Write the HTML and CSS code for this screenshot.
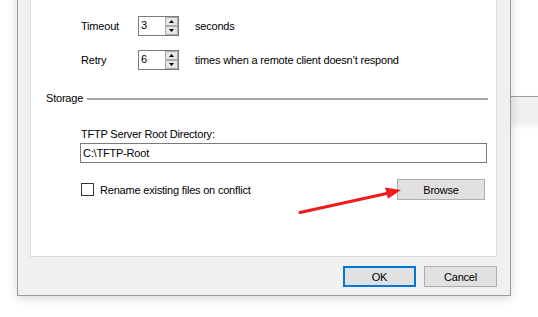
FILE: index.html
```html
<!DOCTYPE html>
<html>
<head>
<meta charset="utf-8">
<link rel="stylesheet" href="styles.css">
</head>
<body>
<div class="desktop">
  <div class="bg-window"></div>
  <div class="dialog">
    <div class="panel">
      <div class="row first">
        <span class="lbl">Timeout</span>
        <div class="spin">
          <span class="val">3</span>
          <svg class="spin-btns" width="13" height="18" viewBox="0 0 13 18">
            <rect x="0.5" y="0.5" width="12" height="8" fill="#e6e6e6" stroke="#acacac"/>
            <rect x="0.5" y="9.5" width="12" height="8" fill="#e6e6e6" stroke="#acacac"/>
            <polygon points="4,6 9,6 6.5,3" fill="#000"/>
            <polygon points="4,12 9,12 6.5,15" fill="#000"/>
          </svg>
        </div>
        <span class="unit">seconds</span>
      </div>
      <div class="row">
        <span class="lbl">Retry</span>
        <div class="spin">
          <span class="val">6</span>
          <svg class="spin-btns" width="13" height="18" viewBox="0 0 13 18">
            <rect x="0.5" y="0.5" width="12" height="8" fill="#e6e6e6" stroke="#acacac"/>
            <rect x="0.5" y="9.5" width="12" height="8" fill="#e6e6e6" stroke="#acacac"/>
            <polygon points="4,6 9,6 6.5,3" fill="#000"/>
            <polygon points="4,12 9,12 6.5,15" fill="#000"/>
          </svg>
        </div>
        <span class="unit">times when a remote client doesn’t respond</span>
      </div>
      <div class="group">
        <span class="group-title">Storage</span>
        <div class="rule"></div>
      </div>
      <div class="field-label">TFTP Server Root Directory:</div>
      <div class="textbox">C:\TFTP-Root</div>
      <div class="check-row">
        <label class="check"><span class="box"></span><span>Rename existing files on conflict</span></label>
        <button class="btn browse">Browse</button>
      </div>
    </div>
    <div class="footer">
      <button class="btn ok">OK</button>
      <button class="btn">Cancel</button>
    </div>
  </div>
  <svg class="arrow" width="538" height="317" viewBox="0 0 538 317">
    <line x1="300" y1="212.5" x2="389" y2="193" stroke="#ee1c1c" stroke-width="3" stroke-linecap="round"/>
    <polygon points="401,190 385,187.5 388,198.8" fill="#ee1c1c"/>
  </svg>
</div>
</body>
</html>
```

FILE: styles.css
```css
* { box-sizing: border-box; }
html, body {
  margin: 0;
  padding: 0;
  background: #ffffff;
}
body {
  font-family: "Liberation Sans", Arial, sans-serif;
  font-size: 11px;
  letter-spacing: -0.2px;
  color: #000;
}
.desktop {
  position: relative;
  width: 538px;
  height: 317px;
  overflow: hidden;
  background: #fff;
}
.bg-window {
  position: absolute;
  left: 505px;
  top: 96px;
  width: 60px;
  height: 26px;
  background: #f0f0f0;
  border-top: 1px solid #a0a0a0;
  box-shadow: 0 3px 6px rgba(0,0,0,0.08);
}
.dialog {
  position: absolute;
  left: 17px;
  top: -12px;
  width: 494px;
  height: 308px;
  background: #f0f0f0;
  border: 1px solid #9a9a9a;
  box-shadow: 0 2px 10px rgba(0,0,0,0.16);
  display: flex;
  flex-direction: column;
}
.panel {
  margin: 0 13px 0 12px;
  height: 268px;
  background: #fff;
  border: 1px solid #dadada;
  padding: 26px 0 0 0;
  display: flex;
  flex-direction: column;
}
.row {
  display: flex;
  align-items: center;
  height: 20px;
  padding-left: 50px;
  margin-top: 14px;
}
.row.first { margin-top: 0; }
.lbl {
  width: 57px;
}
.spin {
  width: 41px;
  height: 20px;
  border: 1px solid #7a7a7a;
  display: flex;
  align-items: flex-start;
  justify-content: space-between;
  background: #fff;
}
.val {
  padding-left: 2px;
  line-height: 16px;
}
.spin-btns {
  display: block;
  margin: 0 0 0 0;
}
.unit {
  margin-left: 16px;
}
.group {
  display: flex;
  align-items: center;
  height: 14px;
  margin-top: 21px;
  padding-left: 15px;
  padding-right: 8px;
}
.group-title {
  margin-right: 4px;
}
.rule {
  flex: 1;
  height: 2px;
  background: #a6a6a6;
  margin-top: 1px;
}
.field-label {
  margin-top: 22px;
  padding-left: 50px;
  height: 14px;
  line-height: 14px;
}
.textbox {
  margin-top: 2px;
  margin-left: 49px;
  width: 407px;
  height: 20px;
  border: 1px solid #7a7a7a;
  line-height: 18px;
  padding-left: 2px;
}
.check-row {
  margin-top: 16px;
  display: flex;
  align-items: center;
  justify-content: space-between;
  padding-left: 50px;
  padding-right: 11px;
  height: 21px;
}
.check {
  display: flex;
  align-items: center;
  gap: 6px;
}
.box {
  width: 13px;
  height: 13px;
  border: 1px solid #333;
  background: #fff;
}
.btn {
  font: inherit;
  letter-spacing: inherit;
  color: #000;
  background: #e1e1e1;
  border: 1px solid #adadad;
  height: 21px;
  padding: 0;
  margin: 0;
}
.browse {
  width: 88px;
}
.footer {
  display: flex;
  justify-content: flex-end;
  gap: 8px;
  padding: 9px 13px 0 0;
}
.footer .btn {
  width: 73px;
}
.btn.ok {
  border: 2px solid #0078d7;
}
.arrow {
  position: absolute;
  left: 0;
  top: 0;
  pointer-events: none;
}
```
